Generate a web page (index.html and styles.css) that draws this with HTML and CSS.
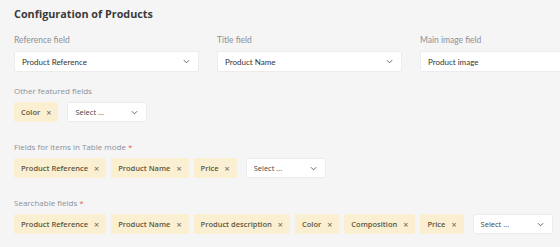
FILE: index.html
```html
<!DOCTYPE html>
<html lang="en">
<head>
  <meta charset="UTF-8" />
  <title>Configuration of Products</title>
  <link rel="stylesheet" href="styles.css">
</head>
<body>
  <div class="page">
    <h1 class="title">Configuration of Products</h1>

    <div class="main-fields">
      <div class="field">
        <label class="label label-main">Reference field</label>
        <div class="select select-wide">
          <span class="select-value">Product Reference</span>
          <svg class="chevron" viewBox="0 0 8 5"><path d="M1 1l3 3 3-3"/></svg>
        </div>
      </div>
      <div class="field">
        <label class="label label-main">Title field</label>
        <div class="select select-wide">
          <span class="select-value">Product Name</span>
          <svg class="chevron" viewBox="0 0 8 5"><path d="M1 1l3 3 3-3"/></svg>
        </div>
      </div>
      <div class="field">
        <label class="label label-main">Main image field</label>
        <div class="select select-wide">
          <span class="select-value">Product image</span>
          <svg class="chevron" viewBox="0 0 8 5"><path d="M1 1l3 3 3-3"/></svg>
        </div>
      </div>
    </div>

    <div class="field field-block">
      <label class="label">Other featured fields</label>
      <div class="tags">
        <span class="tag">Color<span class="tag-remove">×</span></span>
        <div class="select select-small">
          <span class="select-placeholder">Select ...</span>
          <svg class="chevron" viewBox="0 0 8 5"><path d="M1 1l3 3 3-3"/></svg>
        </div>
      </div>
    </div>

    <div class="field field-block">
      <label class="label">Fields for items in Table mode <span class="required">*</span></label>
      <div class="tags">
        <span class="tag">Product Reference<span class="tag-remove">×</span></span>
        <span class="tag">Product Name<span class="tag-remove">×</span></span>
        <span class="tag">Price<span class="tag-remove">×</span></span>
        <div class="select select-small">
          <span class="select-placeholder">Select ...</span>
          <svg class="chevron" viewBox="0 0 8 5"><path d="M1 1l3 3 3-3"/></svg>
        </div>
      </div>
    </div>

    <div class="field field-block">
      <label class="label">Searchable fields <span class="required">*</span></label>
      <div class="tags">
        <span class="tag">Product Reference<span class="tag-remove">×</span></span>
        <span class="tag">Product Name<span class="tag-remove">×</span></span>
        <span class="tag">Product description<span class="tag-remove">×</span></span>
        <span class="tag">Color<span class="tag-remove">×</span></span>
        <span class="tag">Composition<span class="tag-remove">×</span></span>
        <span class="tag">Price<span class="tag-remove">×</span></span>
        <div class="select select-small">
          <span class="select-placeholder">Select ...</span>
          <svg class="chevron" viewBox="0 0 8 5"><path d="M1 1l3 3 3-3"/></svg>
        </div>
      </div>
    </div>
  </div>
</body>
</html>
```

FILE: styles.css
```css
* {
  margin: 0;
  padding: 0;
  box-sizing: border-box;
}

body {
  font-family: 'Open Sans', 'Liberation Sans', sans-serif;
  background: #f5f5f5;
  color: #333;
  overflow: hidden;
  height: 247px;
}

.page {
  padding: 6px 14px 0;
  width: 640px;
}

.title {
  font-size: 10.8px;
  font-weight: 700;
  color: #3a3a3a;
  line-height: 16px;
  margin-bottom: 13px;
}

.main-fields {
  display: grid;
  grid-template-columns: 185px 185px 185px;
  column-gap: 18px;
  margin-bottom: 14px;
}

.field-block {
  margin-bottom: 20px;
}

.label {
  display: block;
  font-size: 8px;
  line-height: 10px;
  color: #8b9099;
  margin-bottom: 6px;
}

.label-main {
  font-family: 'Lato', sans-serif;
  font-size: 8.5px;
}

.required {
  color: #e2665f;
}

.select {
  display: flex;
  align-items: center;
  justify-content: space-between;
  background: #fff;
  border: 1px solid #ececec;
  border-radius: 2px;
  padding: 0 8px 0 7px;
}

.select-wide {
  height: 21px;
}

.select-small {
  width: 80px;
  height: 20px;
  margin-left: 4px;
}

.select-value {
  font-family: 'Lato', sans-serif;
  font-size: 8px;
  color: #333;
}

.select-placeholder {
  font-size: 7.5px;
  color: #444;
}

.chevron {
  width: 7px;
  height: 5px;
  fill: none;
  stroke: #555;
  stroke-width: 1;
}

.tags {
  display: flex;
  flex-wrap: wrap;
  gap: 5px;
}

.tag {
  display: inline-flex;
  align-items: center;
  height: 20px;
  padding: 0 7px;
  background: #faefd0;
  border-radius: 2px;
  font-size: 7.5px;
  font-weight: 600;
  color: #5e5644;
}

.tag-remove {
  margin-left: 6px;
  font-size: 9px;
  font-weight: 400;
  color: #6a6150;
}
```
